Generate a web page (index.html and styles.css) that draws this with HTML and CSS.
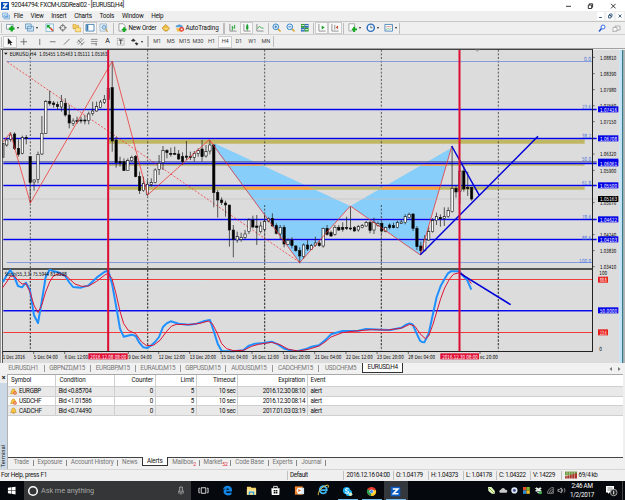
FILE: index.html
```html
<!DOCTYPE html>
<html lang="en">

<head>
  <meta charset="UTF-8">
  <meta name="viewport" content="width=device-width, initial-scale=1.0">
  <title>92044794: FXCM-USDReal02 - [EURUSD,H4]</title>
  <link rel="stylesheet" href="styles.css">
</head>

<body>
  <div class="window">
    <header class="titlebar">
      <svg class="titlebar__logo" viewBox="0 0 10 10"><rect width="10" height="10" fill="#0a4fb5"/><path d="M2.5 2.5h4.6L3 7.4h4.8" fill="none" stroke="#fff" stroke-width="1.7"/></svg>
      <span class="titlebar__text">92044794: FXCM-USDReal02 - [EURUSD,H4]</span>
      <svg class="titlebar__buttons" viewBox="0 0 52 10" fill="none" stroke="#222" stroke-width=".9"><path d="M2 5.300h5M47 2.800l4.600 4.600M51.600 2.800l-4.600 4.600"/><path d="M24.300 4h3.400v3.500h-3.400zM25.300 4V2.800h3.300v3.400h-1"/></svg>
    </header>

    <nav class="menubar">
      <svg class="menubar__icon" viewBox="0 0 8 8"><path d="M.5 1h5v4h-5zM2 3h5.500v4H2z" fill="#d6ebfa" stroke="#6ba5d5" stroke-width=".7"/><path d="M3 5h3.500" stroke="#4b8dc8"/></svg>
      <span>File</span><span>View</span><span>Insert</span><span>Charts</span><span>Tools</span><span>Window</span><span>Help</span>
      <svg class="menubar__buttons" viewBox="0 0 27 8"><path d="M0 0h7v8H0zM9.500 0h7v8h-7zM19.500 0h7v8h-7z" fill="#fff"/><path d="M2 5.500h3M11.500 3.500h2.500v2.500h-2.500zM12.500 3.500V2h2.500v2.500h-1M21.500 2.500l3 3M24.500 2.500l-3 3" fill="none" stroke="#36587c" stroke-width=".9"/></svg>
    </nav>

    <div class="toolbar toolbar--main">
      <i class="grip"></i>
      <button class="tool tool--drop"><svg viewBox="0 0 10 10"><path d="M.5 1.500h7v5h-7z" fill="#fff" stroke="#6d8aa5" stroke-width=".8"/><path d="M6 3v6M3 6h6" stroke="#10a81c" stroke-width="2.400"/></svg></button>
      <button class="tool tool--drop tool--profiles"><svg viewBox="0 0 10 10"><path d="M.5 1h6v5h-6zM2.500 3.500h6.500v5H2.500z" fill="#cfe6f7" stroke="#5a8db8" stroke-width=".8"/></svg></button>
      <button class="tool"><svg viewBox="0 0 10 10"><path d="M1 1h8v8H1z" fill="#e9f7ff" stroke="#70a7c9" stroke-width=".7"/><path d="M2 2h3.500L2 5.500z" fill="#15a12a"/><path d="M5.500 5l3 3.500" stroke="#e44a2c" stroke-width="1.700"/><path d="M2.500 2.500l3 3" stroke="#15a12a" stroke-width="1.500"/></svg></button>
      <button class="tool"><svg viewBox="0 0 10 10" fill="none" stroke="#666" stroke-width=".9"><circle cx="5" cy="5" r="2.700"/><path d="M5 .8v3M5 6.200v3M.8 5h3M6.200 5h3"/></svg></button>
      <button class="tool"><svg viewBox="0 0 10 10"><path d="M1 1.500h3l1 1h2v3.500H1z" fill="#f5cf60" stroke="#c9972a" stroke-width=".6"/><path d="M3.500 4.500h3l.6.700H9.400v4H3.500z" fill="#ffe48b" stroke="#c9972a" stroke-width=".6"/></svg></button>
      <button class="tool tool--on"><svg viewBox="0 0 10 10"><path d="M1 1.500h8.500v7H1z" fill="#fff" stroke="#3878ad" stroke-width=".9"/><path d="M1.500 2h2v6h-2z" fill="#3878ad"/></svg></button>
      <button class="tool"><svg viewBox="0 0 10 10"><path d="M1 1h7v7.500H1z" fill="#e4f0fa" stroke="#8aa9c4" stroke-width=".7"/><circle cx="5.300" cy="4.600" r="2" fill="#b8dcf5" stroke="#4b7ea9" stroke-width=".7"/><path d="M7 6.500L9 9" stroke="#c99a3b" stroke-width="1.200"/></svg></button>
      <i class="sep sep--wide"></i>
      <button class="tool tool--order"><svg viewBox="0 0 10 10"><path d="M1 .8h4.500L7.500 3v5.500H1z" fill="#fff" stroke="#777" stroke-width=".7"/><path d="M6.500 4.500v5M4 7h5" stroke="#10a81c" stroke-width="2"/></svg>New Order</button>
      <button class="tool"><svg viewBox="0 0 10 10"><path d="M1 5.500l4-4 4 4-2.500 3H4z" fill="#edbb3c" stroke="#a8761a" stroke-width=".6"/><path d="M1.500 5.500h7L6 7z" fill="#fbe08a"/></svg></button>
      <button class="tool tool--auto"><svg viewBox="0 0 10 10"><path d="M1 5.500h7L7 9H2.500z" fill="#f2c147"/><path d="M.5 4.500C1 .5 8 .5 8.500 4.500z" fill="#5a9fd6"/><circle cx="7" cy="6.700" r="2.500" fill="#e2351e"/><path d="M6 5.800h2v1.800H6z" fill="#fff"/></svg>AutoTrading</button>
      <i class="sep sep--double"></i>
      <button class="tool"><svg viewBox="0 0 10 10"><path d="M2 1v7.500h7" fill="none" stroke="#777" stroke-width=".8"/><path d="M4.500 3v5M4.500 5H6M7 2v4" stroke="#18a02d"/></svg></button>
      <button class="tool tool--on"><svg viewBox="0 0 10 10"><path d="M2 1v7.500h7" fill="none" stroke="#777" stroke-width=".8"/><path d="M5.500 1v7" stroke="#18a02d"/><path d="M4.400 2.500h2.300v4H4.400z" fill="#18a02d"/></svg></button>
      <button class="tool"><svg viewBox="0 0 10 10"><path d="M2 1v7.500h7" fill="none" stroke="#777" stroke-width=".8"/><path d="M2.500 6l2-2.500 2 1.500L9 5.500" fill="none" stroke="#18a02d" stroke-width=".8"/></svg></button>
      <i class="sep"></i>
      <button class="tool"><svg viewBox="0 0 10 10"><path d="M6 6l3 3" stroke="#d8a536" stroke-width="1.700"/><circle cx="4" cy="4" r="3" fill="#dbf0ff" stroke="#3583c4"/><path d="M2.500 4h3M4 2.500v3" stroke="#2464a8" stroke-width=".8"/></svg></button>
      <button class="tool"><svg viewBox="0 0 10 10"><path d="M6 6l3 3" stroke="#d8a536" stroke-width="1.700"/><circle cx="4" cy="4" r="3" fill="#dbf0ff" stroke="#3583c4"/><path d="M2.500 4h3" stroke="#2464a8" stroke-width=".8"/></svg></button>
      <button class="tool"><svg viewBox="0 0 10 10"><path d="M1 1h4v4H1z" fill="#2e9b34"/><path d="M5 1h4v4H5z" fill="#2c67b8"/><path d="M1 5h4v4H1z" fill="#2c67b8"/><path d="M5 5h4v4H5z" fill="#2e9b34"/><path d="M1.600 2.600h2.800M5.600 2.600h2.800M1.600 7h2.800M5.600 7h2.800" stroke="#e6f3e3"/></svg></button>
      <i class="sep"></i>
      <button class="tool tool--on"><svg viewBox="0 0 10 10"><path d="M2 1v7.500h7" fill="none" stroke="#777" stroke-width=".8"/><path d="M5 2.500l3 2.300-3 2z" fill="#18a02d"/></svg></button>
      <button class="tool tool--on"><svg viewBox="0 0 10 10"><path d="M2 1v7.500h7M5 2v5" fill="none" stroke="#777" stroke-width=".8"/><path d="M8.500 2.500L6 4.500l2.500 2z" fill="#c54a30"/></svg></button>
      <i class="sep"></i>
      <button class="tool tool--drop"><svg viewBox="0 0 10 10"><path d="M1 .8h6v7.500H1z" fill="#fff" stroke="#888" stroke-width=".7"/><path d="M6.500 4v5.500M4 6.700h5.500" stroke="#10a81c" stroke-width="2"/></svg></button>
      <button class="tool tool--drop"><svg viewBox="0 0 10 10"><circle cx="5" cy="5" r="3.800" fill="#eaf5ff" stroke="#2b6cb8" stroke-width="1.500"/><path d="M5 2.800V5h2" fill="none" stroke="#555" stroke-width=".8"/></svg></button>
      <button class="tool tool--drop"><svg viewBox="0 0 10 10"><path d="M1 1.500h8v7H1z" fill="#fff" stroke="#4c88bd"/><path d="M2 4.500l2-1 2 .5 2-1" fill="none" stroke="#c4654b" stroke-width=".7"/><path d="M2 7l2-1 2 .5 2-1" fill="none" stroke="#4ba05c" stroke-width=".7"/></svg></button>
      <i class="sep sep--end"></i>
      <svg class="toolbar__search" viewBox="0 0 26 10"><path d="M2 8.500L4.500 5.500" stroke="#2558d2" stroke-width="1.500"/><circle cx="6" cy="4" r="2" fill="#fff" stroke="#3a6ee0"/><path d="M18 3h5v4h-3l-1 1.500V7h-1z" fill="#f5f5f5" stroke="#999" stroke-width=".7"/><path d="M16 4.500h4v3.500h-3l-1 1z" fill="#fff" stroke="#999" stroke-width=".7"/></svg>
    </div>

    <div class="toolbar toolbar--lines">
      <i class="grip"></i>
      <button class="tool tool--on"><svg viewBox="0 0 10 10"><path d="M3 1v7l1.700-1.500L6 9l1-.5-1.200-2.300H8z" fill="#222"/></svg></button>
      <button class="tool"><svg viewBox="0 0 10 10"><path d="M5 1.500v7M1.500 5h7" stroke="#555" stroke-width=".8"/></svg></button>
      <i class="sep sep--thin"></i>
      <button class="tool"><svg viewBox="0 0 10 10"><path d="M5 2v6.500" stroke="#555" stroke-width=".8"/></svg></button>
      <button class="tool"><svg viewBox="0 0 10 10"><path d="M2 5h6" stroke="#555" stroke-width=".8"/></svg></button>
      <button class="tool"><svg viewBox="0 0 10 10"><path d="M2 8l6-6" stroke="#555" stroke-width=".8"/></svg></button>
      <button class="tool"><svg viewBox="0 0 10 10"><path d="M1 6l5-5M2 8l6-6M5 9l4-4M2 3l5 5" stroke="#555" stroke-width=".7"/></svg></button>
      <button class="tool"><svg viewBox="0 0 10 10"><path d="M2 2.500h7M2 4.700h7M2 7h5" stroke="#666" stroke-width=".7"/><path d="M7.500 6v3" stroke="#555"/></svg></button>
      <button class="tool tool--letter">A</button>
      <button class="tool"><svg viewBox="0 0 10 10"><path d="M1.500 1.500h7v7h-7z" fill="none" stroke="#777" stroke-width=".7" stroke-dasharray="1 .7"/><path d="M3 3.200h4M5 3v4.500" stroke="#333"/></svg></button>
      <button class="tool tool--drop tool--arrows"><svg viewBox="0 0 10 10"><path d="M1 4l2.500-2.500L6 4l-2.500 1zM5 6.500l1.500-1L9 7 7 9z" fill="#333"/></svg></button>
      <i class="sep sep--double"></i>
      <button class="tool tool--period">M1</button>
      <button class="tool tool--period">M5</button>
      <button class="tool tool--period">M15</button>
      <button class="tool tool--period">M30</button>
      <button class="tool tool--period">H1</button>
      <button class="tool tool--period tool--on">H4</button>
      <button class="tool tool--period">D1</button>
      <button class="tool tool--period">W1</button>
      <button class="tool tool--period">MN</button>
      <i class="sep sep--end"></i>
    </div>

    <main class="chart">
      <!-- three units to a pixel -->
      <svg class="chart__canvas" viewBox="0 0 1875 945">
        <defs>
          <clipPath id="pattern"><path d="M628 288L1051 483 899 653zM1051 483L1355 308 1260 630z"/></clipPath>
        </defs>
        <rect class="chart__frame" width="1875" height="945"/>
        <rect class="chart__paper" x="6" y="6" width="1851" height="939"/>
        <path d="M0 1.500H1875" stroke="#a2a2a2" stroke-width="3"/>
        <path d="M0 4.500H1779" stroke="#444" stroke-width="3"/>
        <path d="M7.500 4V945" stroke="#555" stroke-width="3"/>
        <path d="M1.500 4V945" stroke="#9a9a9a" stroke-width="3"/>

        <!-- price panel -->
        <g transform="translate(0 -9)">
          <g class="zone">
            <path d="M327 289.500H1754" stroke-width="14"/>
            <path d="M327 359.500H1754" stroke-width="6"/>
            <path d="M327 429H1754" stroke-width="11"/>
          </g>
          <path class="grid" d="M91 14V906M443 14V906M794 14V906M1144 14V906M1495 14V906"/>
          <path class="pattern" d="M628 288L1051 483 899 653zM1051 483L1355 308 1260 630z"/>
          <g class="zone zone--hit" clip-path="url(#pattern)">
            <path d="M327 289.500H1754" stroke-width="14"/>
            <path d="M327 359.500H1754" stroke-width="6"/>
            <path d="M327 429H1754" stroke-width="11"/>
          </g>
          <path d="M10 462H1790" stroke="#c3c3c3" stroke-width="2"/>
          <path class="level-glow" d="M10 193.500H1776M10 280.500H1776M10 354H1776M10 421.500H1776M10 523.500H1776M10 583.500H1776"/>
          <path class="level level--outer" d="M20 49.500H1776M20 652.500H1776"/>
          <path class="level" d="M10 193.500H1790M10 280.500H1790M10 421.500H1790M10 523.500H1790M10 583.500H1790"/>
          <path d="M10 350.500H1790" stroke="#555a9c" stroke-width="4"/>
          <path class="level" d="M10 355.500H1790"/>
          <path class="zigzag zigzag--base" d="M22 51L899 652"/>
          <path class="grid" d="M794 480V660M1144 480V660"/>
          <g id="candles"></g>
          <path class="zigzag" d="M10 290L31 263 91 474 337 48 443 450 628 284 899 653 1051 483 1261 630 1355 305"/>
          <path class="trend" d="M1355 303L1438 451M1261 629L1614 274"/>
          <path d="M1424 14h16l-8 6z" fill="#aaa"/>
        </g>

        <!-- oscillator panel -->
        <g transform="translate(0 642)">
          <path d="M8 21H1777" stroke="#52544f" stroke-width="6"/>
          <path class="grid" d="M91 24V268M443 24V268M794 24V268M1144 24V268M1495 24V268"/>
          <path d="M10 55.500H620M1200 55.500H1777" stroke="#cfe6e6" stroke-width="2.500"/>
          <path d="M10 52.500H1777M10 211.500H1777" stroke="#f23a3a" stroke-width="3"/>
          <path class="level-glow" d="M10 147H1777"/>
          <path d="M10 146.500H1777" stroke="#0a0af0" stroke-width="4.500"/>
          <path class="stoch" d="M9 60L20 40 31 24 43 45 54 72 66 76 78 62 90 85 102 160 114 183 125 120 137 45 149 23 161 28 172 30 196 42 207 60 219 75 243 77 266 70 290 47 313 30 325 26 336 65 348 130 360 200 371 224 395 218 407 222 418 242 430 256 442 258 454 250 465 240 477 225 489 195 500 184 512 178 536 185 565 188 590 185 610 178 630 174 642 210 653 245 665 267 700 268 730 265 745 252 765 245 790 243 815 239 835 248 853 260 877 266 895 267 915 262 935 254 957 250 975 235 993 217 1027 207 1075 206 1098 201 1145 203 1170 204 1205 197 1220 187 1229 184 1238 187 1248 210 1260 236 1266 240 1273 241 1286 215 1298 160 1310 105 1322 72 1334 50 1344 34 1352 28 1378 28 1390 42 1402 55 1414 83"/>
          <path class="signal" d="M8 77L20 60 31 43 43 42 54 55 66 66 78 65 90 90 102 130 114 152 125 130 137 90 149 60 160 42 178 35 200 43 225 66 245 73 266 72 290 58 313 40 324 34 336 50 348 95 360 148 371 185 385 205 407 215 425 240 440 251 460 250 480 235 500 208 515 192 530 187 565 188 600 184 625 177 637 185 650 210 665 245 680 260 700 266 730 265 755 253 775 247 815 241 840 248 865 262 895 267 925 262 957 252 975 240 993 225 1027 212 1065 207 1115 203 1165 204 1205 198 1229 187 1245 193 1260 215 1276 230 1286 222 1298 190 1310 150 1322 110 1334 78 1348 52 1360 37 1378 32 1390 38 1402 48 1414 65"/>
          <path class="trend" d="M1380 34L1532 128"/>
        </g>

        <path class="marker" d="M324.500 6V910M1378.500 6V910"/>
        <path d="M1777.500 4V911M8 910.500H1779" fill="none" stroke="#222" stroke-width="3"/>
        <path id="ticks" stroke="#333" stroke-width="2"/>
        <path d="M1858 6H1866V945H1858z" fill="#bfe2f4"/>
        <path d="M1868.500 6V945" stroke="#186377" stroke-width="4"/>
        <path d="M1873 6V945" stroke="#b5b5b5" stroke-width="5"/>

        <path d="M12 14h11l-5.500 6z" fill="#111"/>
        <text class="caption" x="29" y="23" textLength="80" lengthAdjust="spacingAndGlyphs">EURUSD,H4</text>
        <text class="caption" x="118" y="23" textLength="204" lengthAdjust="spacingAndGlyphs">1.05455 1.05463 1.05111 1.05163</text>
        <text class="caption" x="14" y="683" textLength="186" lengthAdjust="spacingAndGlyphs">Stoch(55,3,3) 75.5944 83.0298</text>
        <g id="labels"></g>
      </svg>
    </main>

    <div class="chart-tabs">
      <span>EURUSD,H1</span><span>GBPNZD,M15</span><span>EURGBP,M15</span><span>EURAUD,M15</span><span>GBPUSD,M15</span><span>AUDUSD,M15</span><span>CADCHF,M15</span><span>USDCHF,M5</span><span class="is-active">EURUSD,H4</span>
      <svg class="chart-tabs__scroll" viewBox="0 0 14 6"><path d="M4 1L1.500 3 4 5zM10 1l2.500 2L10 5z" fill="#777"/></svg>
    </div>

    <section class="terminal">
      <div class="terminal__side"><b>×</b><span>Terminal</span></div>
      <div class="terminal__body">
        <div class="alerts">
          <div class="alerts__row alerts__row--head"><span>Symbol</span><span>Condition</span><span>Counter</span><span>Limit</span><span>Timeout</span><span>Expiration</span><span>Event</span></div>
          <div class="alerts__row"><span><svg class="bell" viewBox="0 0 8 8"><path d="M.5 6.500C2 5 1.500 1 4 1s2 4 3 5.500z" fill="#f7c63c" stroke="#b9831c" stroke-width=".6"/><circle cx="5.700" cy="5.700" r="2" fill="#e4572c"/><path d="M4.500 5.700h2.400" stroke="#fff" stroke-width=".8"/></svg>EURGBP</span><span>Bid &lt;0.85704</span><span>0</span><span>5</span><span>10 sec</span><span>2016.12.30 08:10</span><span>alert</span></div>
          <div class="alerts__row"><span><svg class="bell" viewBox="0 0 8 8"><path d="M.5 6.500C2 5 1.500 1 4 1s2 4 3 5.500z" fill="#f7c63c" stroke="#b9831c" stroke-width=".6"/><circle cx="5.700" cy="5.700" r="2" fill="#e4572c"/><path d="M4.500 5.700h2.400" stroke="#fff" stroke-width=".8"/></svg>USDCHF</span><span>Bid &lt;1.01586</span><span>0</span><span>5</span><span>10 sec</span><span>2016.12.30 08:14</span><span>alert</span></div>
          <div class="alerts__row"><span><svg class="bell" viewBox="0 0 8 8"><path d="M.8 6.300C2 5 1.500 1 4 1s2 4 3 5.300z" fill="#f7c63c" stroke="#b9831c" stroke-width=".6"/><path d="M3 7h2" stroke="#b9831c"/></svg>CADCHF</span><span>Bid &lt;0.74490</span><span>0</span><span>5</span><span>10 sec</span><span>2017.01.03 03:19</span><span>alert</span></div>
        </div>
        <div class="terminal__tabs">
          <span>Trade</span><span>Exposure</span><span>Account History</span><span>News</span><span class="is-active">Alerts</span><span>Mailbox<sub>2</sub></span><span>Market<sub>52</sub></span><span>Code Base</span><span>Experts</span><span>Journal</span>
        </div>
      </div>
    </section>

    <footer class="statusbar">
      <span>For Help, press F1</span><span>Default</span><span>2016.12.16 04:00</span><span>O: 1.04179</span><span>H: 1.04373</span><span>L: 1.04178</span><span>C: 1.04322</span><span>V: 14229</span>
      <span><svg class="statusbar__net" viewBox="0 0 12 8"><path d="M0 .5h12v4H0z" fill="#6f9a46"/><path d="M0 5.500L12 2v5.500H0z" fill="#a8332b"/><path d="M2 0v8M4.500 0v8M7 0v8M9.500 0v8" stroke="#e9ddca" stroke-width=".5"/></svg>69/4 kb</span>
    </footer>

    <div class="taskbar">
      <div class="taskbar__start"><svg viewBox="0 0 10 10"><path d="M1 2l3.500-.6v3.300H1zM5 1.300L9.500.7v4H5zM1 5.200h3.500v3.400L1 8zM5 5.200h4.500v4.200L5 8.700z" fill="#fff"/></svg></div>
      <div class="taskbar__search">
        <svg class="taskbar__ring" viewBox="0 0 12 12"><circle cx="6" cy="6" r="4.300" fill="none" stroke="#fff" stroke-width="1.500"/></svg>
        <span>Ask me anything</span>
        <svg class="taskbar__mic" viewBox="0 0 8 10"><path d="M2.700 1h2.600v5H2.700z" fill="none" stroke="#bbb" stroke-width=".8"/><path d="M1.500 4.500v2.700h5V4.500M4 7.200V9" fill="none" stroke="#999" stroke-width=".7"/></svg>
      </div>
      <div class="app"><svg viewBox="0 0 12 12"><path d="M3.500 3h5v6h-5zM1 3.500v5M11 3.500v5M1 3.500h1M1 8.500h1M11 3.500h-1M11 8.500h-1" fill="none" stroke="#fff" stroke-width=".9"/></svg></div>
      <div class="app"><svg viewBox="0 0 12 12"><path d="M1 5.500C1.500 2 4 .7 6.500.9 9.500 1.100 11 3.300 11 6v1H4.300C4.500 9 7.500 9.400 10.300 8v2.300C6 12.500 1.500 11 1.700 7.200 1.900 5.400 3 4.400 4.700 3.600 3 4 2 4.500 1 5.500zM4.500 5.200h3.200C7.600 3.200 5 3.300 4.500 5.200z" fill="#1287e8"/></svg></div>
      <div class="app"><svg viewBox="0 0 12 12"><path d="M1 2h4l1 1h5v7.500H1z" fill="#f7d36b"/><path d="M1 5h10v5.500H1z" fill="#fbe69b"/><path d="M3 7h6v3.500H7.500V8.500h-3v2H3z" fill="#2c9be0"/></svg></div>
      <div class="app"><svg viewBox="0 0 12 12"><path d="M1.500 3.500h9l-.4 7.500H1.900z" fill="#fff"/><path d="M4 3.500V1.500h4v2" fill="none" stroke="#fff" stroke-width=".9"/><path d="M4 5.500h1.800v1.700H4zM6.300 5.500h1.800v1.700H6.300zM4 7.700h1.800v1.700H4zM6.300 7.700h1.800v1.700H6.300z" fill="#111"/></svg></div>
      <div class="app"><svg viewBox="0 0 12 12"><path d="M1 1.500h8.500v9H1z" fill="#f7852b"/><path d="M4 3h7v7H4z" fill="#d9e9f5"/><circle cx="5.700" cy="6" r="2.800" fill="#fff"/><path d="M4.700 4.300L7.800 6 4.700 7.700z" fill="#e8681b"/></svg></div>
      <div class="app app--ie"><svg viewBox="0 0 14 14"><path d="M10.600 8.300A4 4 0 1 1 11 6.800H4.500" fill="none" stroke="#41b6ee" stroke-width="2"/><path d="M2 12.500C-.5 11 5 2.500 11.500 1.300c2-.2 1.500 1.700.7 2.900" fill="none" stroke="#f2cd43" stroke-width="1.100"/></svg></div>
      <div class="app app--run"><svg viewBox="0 0 12 12"><circle cx="5" cy="5" r="4" fill="#15aef0"/><circle cx="7.500" cy="7.500" r="3.500" fill="#15aef0"/><path d="M7.300 3.500C6 2.500 3.500 3 4 4.500s3.500.7 3.300 2.400C7 8.300 4.500 8 3.700 7" fill="none" stroke="#fff" stroke-width="1.100"/><circle cx="9.300" cy="9" r="2" fill="#d5ecc0"/></svg></div>
      <div class="app app--run"><svg viewBox="0 0 12 12"><circle cx="6" cy="6" r="5" fill="#e33b2e"/><path d="M6 6L1.700 3.500A5 5 0 0 0 5.500 11z" fill="#22a04b"/><path d="M6 6l-.5 5A5 5 0 0 0 10.800 4.500H6z" fill="#fbcf2c"/><circle cx="6" cy="6" r="2.300" fill="#fff"/><circle cx="6" cy="6" r="1.700" fill="#3e82ee"/></svg></div>
      <div class="app app--run app--current"><svg viewBox="0 0 12 12"><path d="M.8.800h10.400v10.400H.8z" fill="#0b5bc4"/><path d="M3 3.300h5.500L3.700 8.500h5.500" fill="none" stroke="#fff" stroke-width="1.800"/></svg></div>
      <div class="tray">
        <svg viewBox="0 0 9 9"><path d="M1 1h3.500L8 5v3H5L1.500 5z" fill="#e9f6c8"/><path d="M2 2l5 5" stroke="#77b52e"/></svg>
        <svg viewBox="0 0 9 9"><path d="M1 7a1.800 1.800 0 0 1 1-3.200 2.300 2.300 0 0 1 4.400 0A1.700 1.700 0 0 1 7.500 7z" fill="#c9c9c9"/></svg>
        <svg viewBox="0 0 9 9"><circle cx="4.500" cy="4.500" r="3.200" fill="#dfe5f2"/><circle cx="4.500" cy="4.500" r="1.500" fill="#3c4f93"/></svg>
        <svg viewBox="0 0 9 9"><path d="M1 1h3.500v3.500H1z" fill="#e34f2b"/><path d="M4.500 1H8v3.500H4.500z" fill="#79b62c"/><path d="M1 4.500h3.500V8H1z" fill="#2e8bd4"/><path d="M4.500 4.500H8V8H4.500z" fill="#ecb929"/></svg>
        <svg viewBox="0 0 9 9"><path d="M1 2.500L2.700 1.300l1.800 1.200 1.800-1.200L8 2.500 6.300 3.700 8 5 6.300 6 4.500 5 2.700 6 1 5l1.700-1.300zM3 6.700l1.500-1L6 6.700 4.500 7.800z" fill="#e8efe9"/><circle cx="6.500" cy="6.700" r="1.700" fill="#45b556"/></svg>
        <svg viewBox="0 0 9 9"><path d="M1.500 7.500A6 6 0 0 1 7.500 1.500M3.500 7.500a4 4 0 0 1 4-4M5.500 7.500a2 2 0 0 1 2-2M1.500 7.500h6v-6" fill="none" stroke="#aaa" stroke-width=".7"/></svg>
        <svg viewBox="0 0 9 9"><path d="M1 3.500h1.500L4.500 2v5L2.500 5.500H1z" fill="none" stroke="#ddd" stroke-width=".7"/><path d="M5.700 3.200v2.600M7.300 2.200c1 1.500 1 3 0 4.500" fill="none" stroke="#ccc" stroke-width=".7"/></svg>
      </div>
      <div class="clock"><span>2:46 AM</span><span>1/2/2017</span></div>
      <svg class="taskbar__note" viewBox="0 0 14 12"><path d="M1 1h8v6.500H4.500L3 9V7.500H1z" fill="#fff"/><path d="M2.500 3h5M2.500 5h5" stroke="#555" stroke-width=".7"/><circle cx="8.700" cy="7.500" r="3.300" fill="#222" stroke="#bbb" stroke-width=".8"/><path d="M8.700 5.800v3.500" stroke="#fff" stroke-width=".9"/></svg>
      <i class="taskbar__edge"></i>
    </div>
  </div>

  <script>
    // H4 candles, oldest first: high, body top, body bottom, low, b = down / w = up
    const candles = [
      [295, 296, 338, 338, 'w'], [280, 285, 300, 305, 'w'], [262, 270, 283, 290, 'w'], [262, 267, 310, 315, 'b'],
      [283, 310, 328, 335, 'b'], [272, 278, 325, 328, 'w'], [270, 277, 280, 298, 'b'], [335, 335, 412, 475, 'b'],
      [403, 405, 411, 437, 'w'], [320, 328, 403, 415, 'w'], [213, 265, 327, 330, 'w'], [165, 170, 265, 266, 'w'],
      [137, 170, 175, 182, 'b'], [168, 174, 179, 188, 'b'], [170, 179, 185, 195, 'b'], [150, 170, 186, 200, 'w'],
      [160, 175, 210, 215, 'b'], [180, 210, 234, 250, 'b'], [220, 228, 235, 243, 'w'], [215, 227, 230, 237, 'b'],
      [215, 225, 228, 235, 'b'], [210, 225, 228, 238, 'b'], [200, 207, 227, 238, 'w'], [170, 198, 206, 212, 'w'],
      [170, 185, 198, 200, 'w'], [165, 171, 188, 190, 'w'], [150, 163, 172, 177, 'w'], [125, 130, 163, 165, 'w'],
      [48, 128, 288, 320, 'b'], [275, 285, 353, 368, 'b'], [335, 350, 354, 365, 'b'], [340, 350, 377, 378, 'b'],
      [340, 347, 377, 378, 'w'], [332, 337, 347, 350, 'w'], [330, 335, 395, 397, 'b'], [380, 395, 437, 447, 'b'],
      [395, 415, 437, 440, 'w'], [405, 418, 449, 453, 'w'], [400, 413, 418, 425, 'w'], [370, 375, 413, 415, 'w'],
      [330, 355, 373, 390, 'w'], [303, 317, 353, 375, 'w'], [312, 317, 323, 340, 'b'], [308, 325, 328, 335, 'b'],
      [305, 325, 328, 330, 'b'], [315, 327, 342, 345, 'b'], [322, 335, 350, 360, 'b'], [288, 333, 337, 345, 'b'],
      [320, 335, 338, 345, 'b'], [318, 325, 337, 350, 'w'], [310, 317, 325, 335, 'w'], [285, 312, 335, 350, 'b'],
      [300, 320, 333, 338, 'w'], [285, 300, 318, 328, 'w'], [298, 300, 443, 487, 'b'], [435, 442, 465, 518, 'b'],
      [457, 465, 473, 480, 'b'], [467, 474, 480, 515, 'b'], [480, 480, 555, 605, 'b'], [540, 555, 583, 637, 'b'],
      [560, 575, 585, 593, 'w'], [563, 577, 583, 590, 'w'], [555, 567, 577, 582, 'w'], [520, 525, 560, 567, 'w'],
      [512, 525, 546, 550, 'b'], [510, 543, 547, 600, 'b'], [530, 543, 560, 565, 'w'], [510, 530, 553, 558, 'w'],
      [517, 520, 528, 532, 'w'], [505, 520, 543, 545, 'b'], [535, 542, 565, 568, 'b'], [540, 547, 567, 583, 'w'],
      [540, 547, 597, 607, 'b'], [580, 586, 598, 600, 'w'], [577, 585, 602, 610, 'b'], [600, 603, 617, 620, 'b'],
      [607, 617, 633, 655, 'b'], [595, 600, 635, 642, 'w'], [585, 600, 612, 618, 'b'], [597, 602, 613, 615, 'w'],
      [575, 594, 602, 605, 'w'], [587, 594, 602, 605, 'b'], [548, 550, 603, 608, 'w'], [540, 550, 568, 572, 'b'],
      [557, 563, 573, 576, 'b'], [540, 547, 568, 572, 'w'], [540, 547, 555, 558, 'b'], [532, 547, 553, 560, 'b'],
      [515, 547, 550, 555, 'b'], [485, 549, 552, 556, 'b'], [543, 548, 558, 560, 'b'], [540, 545, 555, 560, 'w'],
      [537, 542, 548, 550, 'w'], [528, 533, 543, 545, 'w'], [527, 532, 556, 565, 'b'], [518, 533, 555, 567, 'w'],
      [530, 535, 541, 545, 'w'], [530, 535, 558, 562, 'b'], [545, 547, 560, 562, 'w'], [535, 540, 548, 553, 'b'],
      [533, 542, 548, 550, 'b'], [527, 533, 547, 550, 'w'], [525, 531, 535, 537, 'w'], [508, 515, 533, 538, 'w'],
      [503, 508, 518, 520, 'w'], [505, 507, 550, 558, 'b'], [543, 550, 605, 615, 'b'], [590, 603, 617, 628, 'b'],
      [570, 583, 617, 620, 'w'], [545, 560, 585, 587, 'w'], [520, 527, 560, 563, 'w'], [503, 515, 527, 540, 'w'],
      [508, 517, 522, 545, 'b'], [487, 515, 520, 543, 'w'], [487, 497, 515, 518, 'w'], [303, 430, 500, 503, 'w'],
      [422, 430, 441, 458, 'b'], [345, 378, 440, 477, 'w'], [365, 378, 432, 440, 'b'], [380, 427, 431, 453, 'b'],
      [425, 428, 462, 467, 'b']
    ];

    let bars = '';
    candles.forEach(([high, top, bottom, low, kind], i) => {
      const x = 8.5 + i * 11.72;
      const left = Math.max(x - 3.5, 9);
      bars += `<path class="wick" d="M${x} ${high}V${low}"/>`;
      bars += `<rect class="candle candle--${kind}" x="${left}" y="${top}" width="${x + 3.5 - left}" height="${bottom - top}"/>`;
    });
    document.querySelector('#candles').innerHTML = bars;

    let labels = '';
    let ticks = '';
    const text = (cls, x, y, width, str) => {
      labels += `<text class="${cls}" x="${x}" y="${y + 6.5}" textLength="${width}" lengthAdjust="spacingAndGlyphs">${str}</text>`;
    };
    const tag = (color, x, y, width, str) => {
      labels += `<rect x="${x}" y="${y - 9}" width="${width}" height="18" fill="${color}"/>`;
      text('label label--tag', x + 6, y, width - 10, str);
    };

    // price scale
    [['1.08810', 28], ['1.08390', 77], ['1.07980', 125], ['1.07560', 173], ['1.07150', 221],
     ['1.06320', 318], ['1.05900', 367], ['1.05070', 464], ['1.04240', 560],
     ['1.03830', 608], ['1.03410', 656]].forEach(([price, y]) => {
      text('label', 1800, y, 49, price);
      ticks += `M1777 ${y}h7`;
    });
    labels += '<rect x="1794" y="332" width="61" height="10" fill="#0000e6"/>';
    tag('#0000e6', 1794, 184, 61, '1.07416');
    tag('#0000e6', 1794, 271, 61, '1.06708');
    tag('#0000e6', 1794, 346, 61, '1.06061');
    tag('#0000e6', 1794, 412, 61, '1.05500');
    tag('#000', 1794, 453, 61, '1.05163');
    tag('#0000e6', 1794, 514, 61, '1.04622');
    tag('#0000e6', 1794, 574, 61, '1.04103');
    text('label', 1798, 675, 23, '100');
    tag('#e8201c', 1794, 695, 30, '88.8');
    tag('#0000e6', 1794, 787, 61, '50.0000');
    tag('#e8201c', 1794, 853, 30, '23.6');
    text('label', 1798, 901, 8, '0');

    // fibo levels
    [['0.0', 31, 21], ['23.6', 175, 27], ['38.2', 263, 27], ['50.0', 333, 27], ['61.8', 405, 27], ['78.6', 507, 27],
     ['88.6', 568, 27], ['100.0', 637, 35]].forEach(([level, y, width]) => {
      text('label label--fibo', 1773 - width, y, width, level);
    });

    // time scale
    [['1 Dec 2016', 8, 67], ['5 Dec 04:00', 101, 72], ['6 Dec 12:00', 194, 70], ['9 Dec 04:00', 385, 70], ['12 Dec 12:00', 476, 79],
     ['13 Dec 20:00', 569, 79], ['15 Dec 04:00', 663, 80], ['16 Dec 12:00', 756, 80], ['19 Dec 20:00', 850, 80],
     ['21 Dec 04:00', 944, 80], ['22 Dec 12:00', 1038, 80], ['23 Dec 20:00', 1131, 80], ['28 Dec 04:00', 1225, 80],
     ['ec 20:00', 1440, 54]].forEach(([day, x, width]) => {
      text('label', x, 925, width, day);
      ticks += `M${x} 911v7`;
    });
    tag('#e00c34', 265, 925, 118, '2016.12.08 08:00');
    tag('#e00c34', 1321, 925, 116, '2016.12.30 08:00');

    document.querySelector('#labels').innerHTML = labels;
    document.querySelector('#ticks').setAttribute('d', ticks);
  </script>
</body>

</html>
```
FILE: styles.css
```css
*,
*::before,
*::after {
  box-sizing: border-box;
}

body {
  margin: 0;
}

button {
  border: 0;
  padding: 0;
  background: none;
  font: inherit;
  letter-spacing: inherit;
  color: inherit;
}

svg {
  display: block;
  flex: none;
}

.window {
  display: flex;
  flex-direction: column;
  width: 625px;
  height: 500px;
  overflow: hidden;
  background-color: #efefef;
  color: #111;
  font-family: Roboto, "Open Sans", sans-serif;
  font-size: 6.3px;
  letter-spacing: -0.3px;
  line-height: 1;
  white-space: nowrap;
}

/* Title and menu */

.titlebar {
  display: flex;
  align-items: center;
  flex: none;
  height: 11px;
  padding-left: 1px;
  background-color: #fff;
}

.titlebar__logo {
  width: 8px;
  height: 8px;
  margin-right: 2px;
}

.titlebar__text {
  font-size: 6.5px;
  letter-spacing: -0.34px;
}

.titlebar__buttons {
  width: 52px;
  height: 10px;
  margin-left: auto;
  margin-right: 9px;
}

.menubar {
  display: flex;
  align-items: center;
  flex: none;
  gap: 7.7px;
  height: 11px;
  padding-left: 2px;
  border-bottom: 1px solid #c6c6c6;
  font-size: 6.4px;
  letter-spacing: -0.2px;
}

.menubar__icon {
  width: 8px;
  height: 8px;
  margin-right: -4px;
}

.menubar__buttons {
  width: 27px;
  height: 8px;
  margin-left: auto;
  margin-right: 1px;
}

/* Toolbars */

.toolbar {
  display: flex;
  align-items: center;
  flex: none;
  height: 13px;
}

.toolbar--main {
  border-bottom: 1px solid #d0d0d0;
}

.toolbar__search {
  width: 26px;
  height: 10px;
  margin-left: auto;
  margin-right: 2px;
}

.grip {
  width: 1px;
  height: 10px;
  margin: 0 1px 0 1px;
  background-color: #c4c4c4;
}

.sep {
  width: 1px;
  height: 11px;
  margin: 0 1px 0 1.5px;
  background-color: #bdbdbd;
}

.sep--thin {
  width: 0;
}

.sep--wide {
  margin: 0 1.5px 0 3px;
}

.sep--double {
  width: 2px;
  background-color: transparent;
  border: solid #bdbdbd;
  border-width: 0 .6px;
}

.sep--end {
  margin: 0;
}

.tool {
  display: flex;
  align-items: center;
  justify-content: center;
  flex: none;
  width: 13.6px;
  height: 12px;
}

.tool svg {
  width: 9.5px;
  height: 9.5px;
}

.tool--on {
  background-color: #f9f9f9;
  border: 1px solid #ccc;
}

.tool--drop {
  width: 18px;
  gap: 1.5px;
}

.tool--drop::after {
  content: "";
  border: solid transparent;
  border-width: 2px 1.5px 0;
  border-top-color: #222;
}

.tool--profiles {
  width: 21.5px;
}

.tool--order {
  width: 42.5px;
  gap: 1px;
  letter-spacing: -0.2px;
}

.tool--auto {
  width: 49.5px;
  gap: 1px;
  letter-spacing: -0.1px;
}

.tool--letter {
  font-size: 7px;
}

.tool--period {
  color: #444;
  font-size: 5.6px;
  letter-spacing: -0.1px;
}

/* Chart */

.chart {
  flex: none;
  height: 315px;
}

.chart__canvas {
  width: 625px;
  height: 315px;
}

.chart__frame {
  fill: #efefef;
}

.chart__paper {
  fill: #dcdcdc;
}

.grid {
  fill: none;
  stroke: #333;
  stroke-width: 2.4;
  stroke-dasharray: 6 5;
}

.zone {
  fill: none;
  stroke: #c0b764;
}

.zone--hit {
  stroke: #fba23c;
}

.pattern {
  fill: #87cefa;
}

.level {
  fill: none;
  stroke: #0000f0;
  stroke-width: 4;
}

.level--outer {
  stroke: #7390dd;
  stroke-width: 2.5;
}

.level-glow {
  fill: none;
  stroke: #f4f2d8;
  stroke-width: 8;
  opacity: .5;
}

.zigzag {
  fill: none;
  stroke: #f02a2a;
  stroke-width: 2.2;
}

.zigzag--base {
  stroke-dasharray: 6 5;
}

.wick {
  stroke: #222;
  stroke-width: 2.2;
}

.candle {
  stroke: #111;
  stroke-width: 1.8;
}

.candle--b {
  fill: #000;
}

.candle--w {
  fill: #fff;
}

.trend {
  fill: none;
  stroke: #0000d8;
  stroke-width: 4.5;
}

.stoch,
.signal {
  fill: none;
  stroke: #1e90ff;
  stroke-width: 6;
  stroke-linejoin: round;
}

.signal {
  stroke: #dc1438;
  stroke-width: 3;
}

.marker {
  stroke: #dc0c34;
  stroke-width: 6;
}

.caption,
.label {
  fill: #000;
  font-family: "DejaVu Sans", sans-serif;
  font-size: 17px;
  letter-spacing: 0;
}

.label--tag {
  fill: #fff;
}

.label--fibo {
  fill: #4a6fdc;
}

/* Chart tabs */

.chart-tabs {
  display: grid;
  grid-template-columns: 44.5px 46.3px 45px 45px 45.2px 46.8px 46.6px 42.6px 41.5px 1fr;
  flex: none;
  align-items: center;
  height: 11px;
  background-color: #f1f1f1;
  color: #777;
  font-size: 6.4px;
}

.chart-tabs span {
  display: flex;
  align-items: center;
  height: 7px;
  justify-content: center;
  border-right: 1px solid #999;
}

.chart-tabs span:first-child {
  padding-left: 3px;
}

.chart-tabs span:nth-child(8) {
  border-right: 0;
}

.chart-tabs .is-active {
  height: 10px;
  align-self: start;
  border: 1px solid #333;
  border-top: 0;
  background-color: #fff;
  color: #111;
}

.chart-tabs__scroll {
  justify-self: end;
  width: 14px;
  height: 6px;
  margin-right: 3px;
}

/* Terminal */

.terminal {
  display: flex;
  flex: none;
  height: 95px;
}

.terminal__side {
  display: flex;
  flex-direction: column;
  align-items: center;
  justify-content: space-between;
  width: 7px;
  padding-bottom: 2px;
  background: linear-gradient(to bottom, #efefef 9px, #cbd9e6 9px);
}

.terminal__side b {
  margin-top: 1px;
  font-size: 7px;
}

.terminal__side span {
  writing-mode: vertical-rl;
  transform: rotate(180deg);
  font-size: 5.8px;
  letter-spacing: 0;
}

.terminal__body {
  display: flex;
  flex: 1;
  flex-direction: column;
  margin-right: 2px;
  border-top: 1px solid #a8a8a8;
  border-left: 1px solid #b0b0b0;
  background-color: #fff;
}

.alerts {
  flex: 1;
}

.alerts__row {
  display: grid;
  grid-template-columns: 47.5px 59px 41px 41px 41.5px 69.5px 1fr;
  align-items: center;
  height: 9.6px;
  border-bottom: 1px solid #cfcfcf;
}

.alerts__row:nth-child(even) {
  background-color: #e9e9e9;
}

.alerts__row--head {
  height: 12.2px;
  letter-spacing: -0.1px;
}

.alerts__row span {
  display: flex;
  align-items: center;
  height: 100%;
  padding: 0 1.5px 0 3px;
  border-right: 1px solid #cfcfcf;
}

.alerts__row span:nth-child(n+3):nth-child(-n+6) {
  justify-content: flex-end;
}

.alerts__row span:nth-child(6) {
  letter-spacing: -0.42px;
}

.alerts__row--head span:nth-child(6) {
  letter-spacing: -0.1px;
}

.alerts__row span:last-child {
  border-right: 0;
}

.alerts__row--head span:nth-child(2) {
  padding-left: 4px;
}

.bell {
  width: 7px;
  height: 7px;
  margin: 0 2px 0 -1px;
}

.terminal__tabs {
  display: flex;
  height: 12px;
  padding-left: 1.5px;
  border-top: 1px solid #444;
  background-color: #f0f0f0;
  color: #777;
  letter-spacing: -0.15px;
}

.terminal__tabs span {
  position: relative;
  display: flex;
  align-items: center;
  height: 9px;
  padding: 0 4.3px;
}

.terminal__tabs span::after {
  content: "";
  align-self: center;
  width: 1px;
  height: 6px;
  margin-right: -4.8px;
  margin-left: 3.8px;
  background-color: #888;
}

.terminal__tabs .is-active {
  margin-top: -1px;
  border: 1px solid #333;
  border-top: 0;
  background-color: #fff;
  color: #111;
}

.terminal__tabs .is-active::after,
.terminal__tabs span:nth-child(4)::after {
  display: none;
}

.terminal__tabs sub {
  align-self: flex-end;
  margin-right: -1px;
  color: #e8202a;
  font-size: 5px;
}

/* Status bar */

.statusbar {
  display: grid;
  grid-template-columns: 286.5px 56.5px 49.5px 35px 35px 33px 34px 31.5px 1fr;
  align-items: center;
  flex: none;
  height: 11.5px;
  border-top: 1px solid #d5d5d5;
  letter-spacing: -0.35px;
}

.statusbar span {
  display: flex;
  align-items: center;
  gap: 2px;
  height: 9px;
  padding-left: 2.5px;
  border-left: 1px solid #c0c0c0;
}

.statusbar span:first-child {
  padding-left: 1px;
  border-left: 0;
  letter-spacing: -0.25px;
}

.statusbar__net {
  width: 12px;
  height: 8px;
}

/* Taskbar */

.taskbar {
  display: flex;
  flex: 1;
  align-items: center;
  background-color: #05080c;
  color: #fff;
}

.taskbar__start {
  width: 23.5px;
  padding-left: 7px;
}

.taskbar__start svg {
  width: 9px;
  height: 9px;
}

.taskbar__search {
  display: flex;
  align-items: center;
  align-self: stretch;
  width: 167.5px;
  padding: 0 6px 0 3.5px;
  background-color: #353637;
  color: #a8a8a8;
  font-size: 7.3px;
  letter-spacing: -0.05px;
}

.taskbar__ring {
  width: 12px;
  height: 12px;
  margin-right: 2px;
}

.taskbar__mic {
  width: 8px;
  height: 10px;
  margin-left: auto;
}

.app {
  display: flex;
  align-items: center;
  align-self: stretch;
  justify-content: center;
  width: 24.1px;
}

.app svg {
  width: 11px;
  height: 11px;
}

.app--ie svg {
  width: 12.5px;
  height: 12.5px;
}

.app--run {
  border: solid transparent;
  border-width: 1px 2px 0;
  background: linear-gradient(#76b9ed, #76b9ed) bottom / 100% 1.3px no-repeat;
}

.app--current {
  background-color: #34383d;
}

.tray {
  display: flex;
  gap: 2.9px;
  margin-left: auto;
}

.tray svg {
  width: 8.8px;
  height: 8.8px;
}

.clock {
  display: flex;
  flex-direction: column;
  align-items: center;
  gap: 2px;
  width: 30px;
  margin: 0 8px 0 1px;
  font-size: 6.3px;
  letter-spacing: -0.3px;
}

.taskbar__note {
  width: 14px;
  height: 12px;
  margin-right: 3px;
}

.taskbar__edge {
  width: 1px;
  height: 20px;
  margin-right: 2px;
  background-color: #444;
}
```
